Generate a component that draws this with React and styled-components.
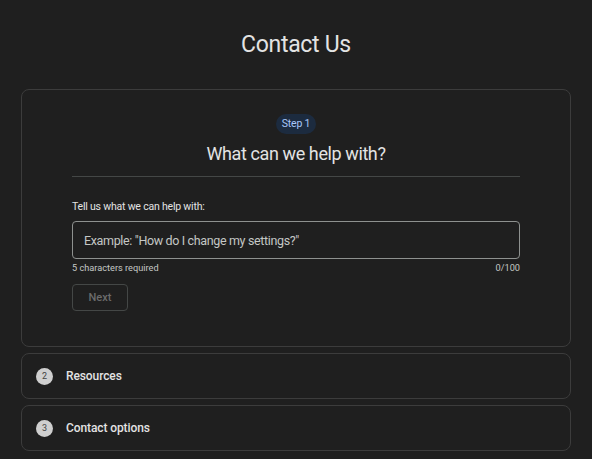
import styled, { createGlobalStyle } from 'styled-components';

const GlobalStyle = createGlobalStyle`
  body {
    margin: 0;
    background: #1f1f1f;
    font-family: Roboto, "Noto Sans", Arial, sans-serif;
    color: #e3e3e3;
  }
`;

const Page = styled.div`
  padding: 0 21px 8px;
`;

const Title = styled.h1`
  margin: 0;
  padding-top: 29px;
  font-size: 23px;
  letter-spacing: -0.3px;
  line-height: 32px;
  font-weight: 400;
  text-align: center;
  color: #e3e3e3;
`;

const Stack = styled.div`
  margin-top: 28px;
  display: flex;
  flex-direction: column;
  gap: 6px;
`;

const Card = styled.section`
  border: 1px solid #3c3c3c;
  border-radius: 8px;
  background: #1f1f1f;
`;

const OpenBody = styled.div`
  padding: 24px 50px 35px;
  display: flex;
  flex-direction: column;
  align-items: center;
`;

const Badge = styled.span`
  background: #1c2b3f;
  color: #a8c7fa;
  font-size: 10.5px;
  line-height: 20px;
  padding: 0 6px;
  border-radius: 10px;
  letter-spacing: -0.2px;
`;

const Heading = styled.h2`
  margin: 8px 0 0;
  font-size: 18px;
  letter-spacing: -0.4px;
  line-height: 24px;
  font-weight: 400;
  color: #e3e3e3;
`;

const Divider = styled.hr`
  width: 100%;
  border: 0;
  border-top: 1px solid #444746;
  margin: 10px 0 0;
`;

const Form = styled.div`
  align-self: stretch;
  margin-top: 22px;
`;

const Label = styled.div`
  font-size: 10.5px;
  letter-spacing: -0.2px;
  line-height: 16px;
  color: #e3e3e3;
`;

const Input = styled.div`
  margin-top: 6px;
  height: 38px;
  box-sizing: border-box;
  border: 1px solid #8e918f;
  border-radius: 4px;
  padding: 0 11px;
  display: flex;
  align-items: center;
  font-size: 12.5px;
  letter-spacing: -0.35px;
  color: #c4c7c5;
`;

const Helper = styled.div`
  margin-top: 2px;
  display: flex;
  justify-content: space-between;
  font-size: 9.2px;
  line-height: 14px;
  color: #c4c7c5;
`;

const NextButton = styled.button`
  margin-top: 9px;
  width: 56px;
  height: 27px;
  border: 1px solid #444746;
  border-radius: 4px;
  background: transparent;
  color: #6b6b6b;
  font-family: inherit;
  font-size: 11px;
  font-weight: 500;
`;

const Collapsed = styled.div`
  height: 44px;
  padding: 0 14px;
  display: flex;
  align-items: center;
  gap: 13px;
`;

const StepNum = styled.span`
  width: 17px;
  height: 17px;
  border-radius: 50%;
  background: #cfcfcf;
  color: #444;
  font-size: 9px;
  display: flex;
  align-items: center;
  justify-content: center;
`;

const StepTitle = styled.span`
  font-size: 12px;
  letter-spacing: -0.1px;
  font-weight: 500;
  color: #e3e3e3;
`;

const steps = [
  { n: 2, title: 'Resources' },
  { n: 3, title: 'Contact options' },
];

const App = () => {
  return (
    <Page>
      <GlobalStyle />
      <Title>Contact Us</Title>
      <Stack>
        <Card>
          <OpenBody>
            <Badge>Step 1</Badge>
            <Heading>What can we help with?</Heading>
            <Divider />
            <Form>
              <Label>Tell us what we can help with:</Label>
              <Input>Example: "How do I change my settings?"</Input>
              <Helper>
                <span>5 characters required</span>
                <span>0/100</span>
              </Helper>
              <NextButton disabled>Next</NextButton>
            </Form>
          </OpenBody>
        </Card>
        {steps.map((s) => (
          <Card key={s.n}>
            <Collapsed>
              <StepNum>{s.n}</StepNum>
              <StepTitle>{s.title}</StepTitle>
            </Collapsed>
          </Card>
        ))}
      </Stack>
    </Page>
  );
};

export default App;
